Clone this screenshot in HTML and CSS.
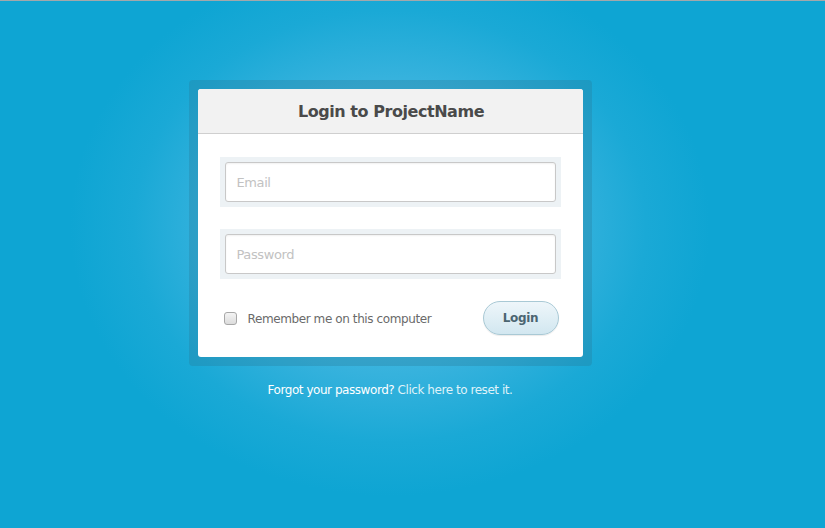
FILE: index.html
```html
<!DOCTYPE html>
<html>
<head>
<meta charset="utf-8">
<link rel="stylesheet" href="styles.css">
</head>
<body>
<div class="page">
  <div class="frame">
    <form class="card">
      <div class="card-head"><h1 class="title">Login to ProjectName</h1></div>
      <div class="card-body">
        <div class="field"><input class="input" type="text" placeholder="Email"></div>
        <div class="field"><input class="input" type="password" placeholder="Password"></div>
        <div class="actions">
          <label class="remember"><span class="check"></span><span class="remember-text">Remember me on this computer</span></label>
          <button class="btn" type="button">Login</button>
        </div>
      </div>
    </form>
  </div>
  <p class="forgot">Forgot your password? <a class="forgot-link" href="#">Click here to reset it.</a></p>
</div>
</body>
</html>
```
FILE: styles.css
```css
html, body {
  margin: 0;
  padding: 0;
  height: 100%;
}
body {
  font-family: "DejaVu Sans", Verdana, sans-serif;
  background: #0ea5d3;
  border-top: 1px solid #a3a8ab;
  box-sizing: border-box;
}
.page {
  height: 527px;
  background: radial-gradient(ellipse 320px 270px at 390px 225px, #6ccbe8 0%, #4dbde2 30%, #36b2dd 55%, #1aa9d6 80%, #0ea5d3 100%);
  display: flex;
  flex-direction: column;
  align-items: center;
  padding-top: 79px;
  box-sizing: border-box;
}
.frame {
  width: 403px;
  padding: 9px;
  box-sizing: border-box;
  background: rgba(40, 120, 150, 0.3);
  border-radius: 4px;
  margin-left: -45px;
}
.card {
  background: #fff;
  border-radius: 3px;
  overflow: hidden;
  display: block;
}
.card-head {
  height: 44px;
  background: #f2f2f2;
  border-bottom: 1px solid #cfcfcf;
  display: flex;
  align-items: center;
  justify-content: center;
}
.title {
  margin: 0 0 0 2px;
  font-size: 16px;
  font-weight: bold;
  color: #4a4a4a;
  letter-spacing: -0.45px;
}
.card-body {
  padding: 23px 22px 22px 22px;
}
.field {
  background: #edf2f5;
  padding: 5px;
  margin-bottom: 22px;
}
.input {
  display: block;
  width: 100%;
  height: 40px;
  box-sizing: border-box;
  border: 1px solid #c8c8c8;
  border-radius: 3px;
  padding: 0 11px;
  font-family: inherit;
  font-size: 13px;
  color: #555;
  box-shadow: inset 0 1px 2px rgba(0,0,0,0.06);
  outline: none;
}
.input::placeholder {
  color: #c2c2c2;
  letter-spacing: -0.4px;
}
.actions {
  display: flex;
  align-items: center;
  justify-content: space-between;
}
.remember {
  display: flex;
  align-items: center;
  padding-left: 4px;
}
.check {
  width: 11px;
  height: 11px;
  border: 1px solid #a8a8a8;
  border-radius: 3px;
  background: linear-gradient(#f4f4f4, #dcdcdc);
  margin-right: 11px;
}
.remember-text {
  font-size: 12px;
  color: #6a6a6a;
  letter-spacing: -0.4px;
  padding-top: 1px;
}
.btn {
  width: 76px;
  height: 34px;
  margin-right: 2px;
  border: 1px solid #a9c9d5;
  border-radius: 17px;
  background: linear-gradient(#eef6fa, #d2e7f0);
  box-shadow: 0 1px 1px rgba(0,0,0,0.08);
  font-family: inherit;
  font-size: 12px;
  font-weight: bold;
  color: #4b6571;
  padding: 0;
  letter-spacing: -0.3px;
}
.forgot {
  margin: 17px 0 0 0;
  font-size: 12px;
  color: #ffffff;
  margin-left: -45px;
  letter-spacing: -0.45px;
}
.forgot-link {
  color: #dff2f9;
  text-decoration: none;
}
```
